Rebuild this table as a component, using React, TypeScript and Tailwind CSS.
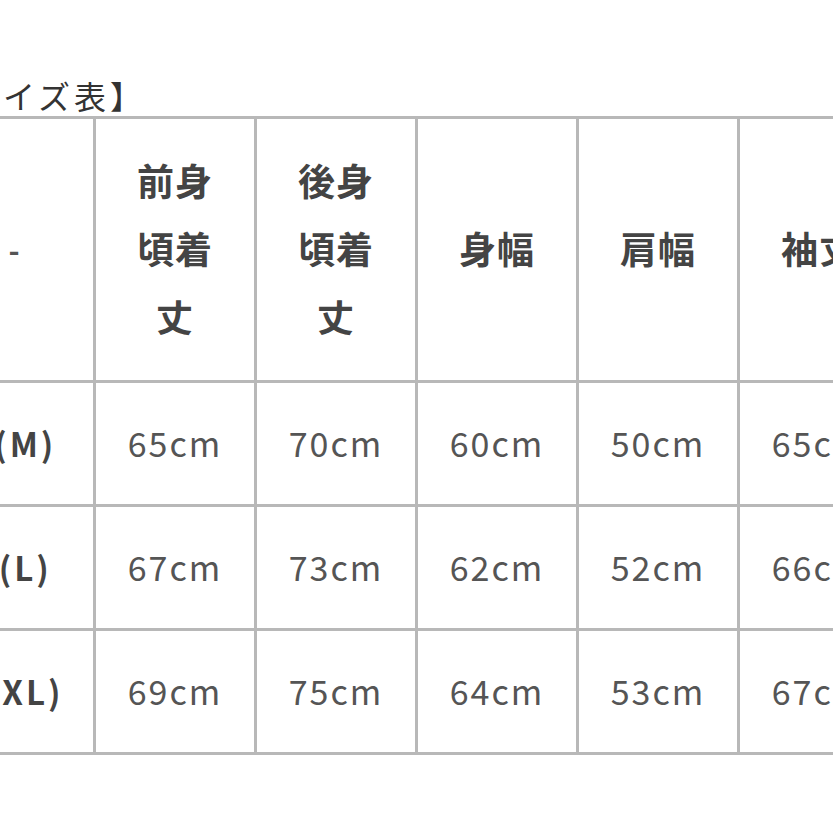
import React from "react";

const jp = "font-['Noto_Sans_CJK_JP','Noto_Sans',sans-serif]";

const headers = [
  ["前身", "頃着", "丈"],
  ["後身", "頃着", "丈"],
  ["身幅"],
  ["肩幅"],
  ["袖丈"],
];

const rows = [
  { size: "1(M)", values: ["65cm", "70cm", "60cm", "50cm", "65cm"] },
  { size: "2(L)", values: ["67cm", "73cm", "62cm", "52cm", "66cm"] },
  { size: "3(XL)", values: ["69cm", "75cm", "64cm", "53cm", "67cm"] },
];

const cell = "border-[3px] border-[#b8b8b8] w-[161px] min-w-[161px] text-center align-middle p-0";

export default function App() {
  return (
    <div className={`w-[833px] h-[833px] overflow-hidden bg-white ${jp}`}>
      {/* title, left part is cut off */}
      <div className="pt-[76px] -ml-[69px] text-[32px] leading-[38px] tracking-[4px] text-[#333] whitespace-nowrap">
        【サイズ表】
      </div>

      <table className="mt-[2px] -ml-[68px] border-collapse table-fixed">
        <tbody>
          <tr className="h-[264px]">
            <td className={`${cell} text-[#555] text-[30px] font-bold`}>-</td>
            {headers.map((lines, i) => (
              <td key={i} className={`${cell} text-[#444] text-[37px] font-bold leading-[68px] tracking-[1px] pb-[4px]`}>
                {lines.map((l, j) => (
                  <div key={j}>{l}</div>
                ))}
              </td>
            ))}
          </tr>
          {rows.map((r) => (
            <tr key={r.size} className="h-[124px]">
              <td className={`${cell} text-[#444] text-[33px] font-bold tracking-[3px]`}>{r.size}</td>
              {r.values.map((v, i) => (
                <td key={i} className={`${cell} text-[#555] text-[34px] tracking-[2px] pb-[3px]`}>
                  {v}
                </td>
              ))}
            </tr>
          ))}
        </tbody>
      </table>
    </div>
  );
}
